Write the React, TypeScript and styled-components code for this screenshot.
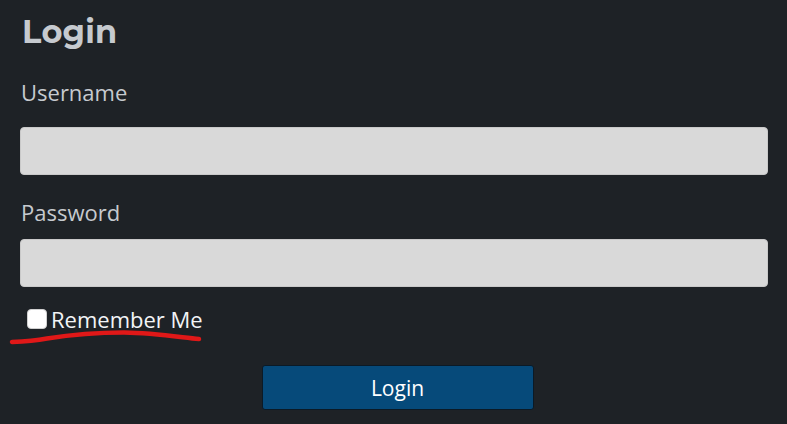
import styled, { createGlobalStyle } from "styled-components";

const Global = createGlobalStyle`
	html, body {
		margin: 0;
		padding: 0;
		background: #1e2226;
	}
	body {
		font-family: "Open Sans", "Liberation Sans", sans-serif;
	}
`;

const App: React.FC = () => {
	return (
		<>
			<Global />
			<Page>
				<Title>Login</Title>
				<Field>
					<Label htmlFor="username" gap={20}>
						Username
					</Label>
					<Input id="username" type="text" />
				</Field>
				<Field>
					<Label htmlFor="password" gap={12}>
						Password
					</Label>
					<Input id="password" type="password" />
				</Field>
				<Remember>
					<Check type="checkbox" />
					<CheckText>Remember Me</CheckText>
					<Scribble viewBox="0 0 194 16">
						<path
							d="M3 13 C 14 12.5, 24 12, 38 9.5 C 60 6, 90 3.5, 115 3.5 C 145 4, 170 8, 190 10"
							fill="none"
							stroke="#e01818"
							strokeWidth="4.5"
							strokeLinecap="round"
						/>
					</Scribble>
				</Remember>
				<Actions>
					<Submit type="button">Login</Submit>
				</Actions>
			</Page>
		</>
	);
};
export default App;

const Page = styled.div`
	width: 787px;
	height: 424px;
	box-sizing: border-box;
	padding: 12px 19px 0 20px;
	display: flex;
	flex-direction: column;
	overflow: hidden;
`;

const Title = styled.h1`
	margin: 0 0 0 2px;
	font-family: "Montserrat", "Lato", "Open Sans", sans-serif;
	font-weight: 700;
	font-size: 32px;
	line-height: 40px;
	color: #c6cacf;
	letter-spacing: 0.2px;
`;

const Field = styled.div`
	display: flex;
	flex-direction: column;
	margin-top: 25px;
	& + & {
		margin-top: 22px;
	}
`;

const Label = styled.label<{ gap: number }>`
	font-size: 22px;
	line-height: 30px;
	color: #c6cacf;
	margin-left: 1px;
	margin-bottom: ${(p) => p.gap}px;
`;

const Input = styled.input`
	height: 48px;
	box-sizing: border-box;
	border: 1px solid #c9c9c9;
	border-radius: 4px;
	background: #d9d9d9;
	outline: none;
	padding: 0 12px;
	font-size: 18px;
`;

const Remember = styled.label`
	position: relative;
	display: flex;
	align-items: center;
	align-self: flex-start;
	margin: 17px 0 0 7px;
	gap: 4px;
`;

const Check = styled.input`
	appearance: none;
	margin: 0;
	width: 20px;
	height: 20px;
	border-radius: 4px;
	background: #ffffff;
	border: 1px solid #d0d0d0;
	box-sizing: border-box;
`;

const CheckText = styled.span`
	font-size: 22px;
	line-height: 30px;
	color: #f2f4f6;
`;

const Scribble = styled.svg`
	position: absolute;
	left: -18px;
	top: 25px;
	width: 194px;
	height: 16px;
	overflow: visible;
`;

const Actions = styled.div`
	display: flex;
	justify-content: center;
	margin-top: 31px;
`;

const Submit = styled.button`
	width: 272px;
	height: 45px;
	margin-left: 7px;
	background: #064a7a;
	color: #ffffff;
	border: 1px solid #0b1a26;
	border-radius: 3px;
	font-family: "Open Sans", "Liberation Sans", sans-serif;
	font-size: 21px;
	cursor: pointer;
`;
